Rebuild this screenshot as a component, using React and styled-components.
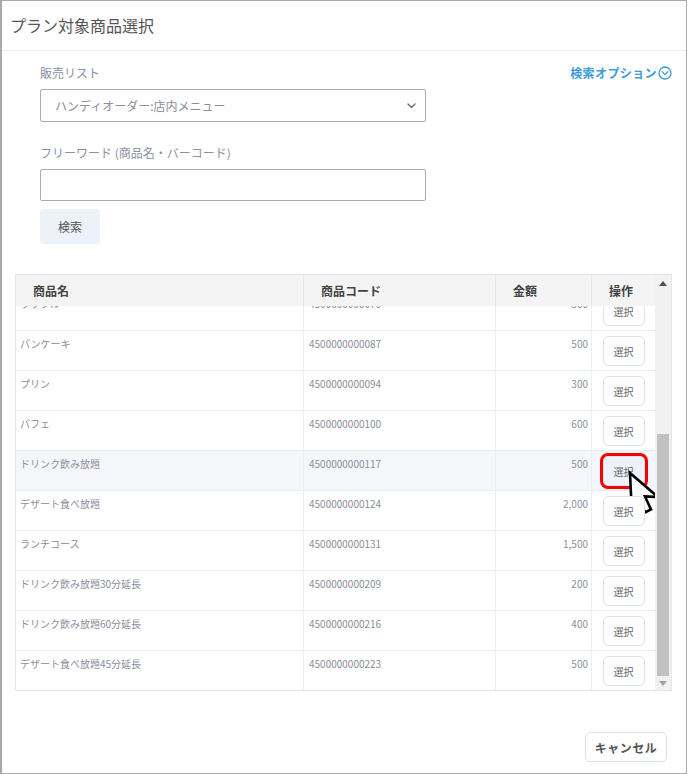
import React from 'react';
import styled, { createGlobalStyle } from 'styled-components';

const Global = createGlobalStyle`
  html, body { margin: 0; padding: 0; background: #fff; }
  body { font-family: "Noto Sans CJK JP", "Noto Sans", sans-serif; }
  * { box-sizing: border-box; }
`;

const Dialog = styled.div`
  width: 687px;
  height: 774px;
  border: 1px solid #a9a9a9;
  border-left-width: 2px;
  display: flex;
  flex-direction: column;
  background: #fff;
`;

const Header = styled.div`
  height: 50px;
  flex: none;
  border-bottom: 1px solid #ededed;
  display: flex;
  align-items: center;
  padding-left: 8px;
  padding-bottom: 2px;
  font-size: 16px;
  color: #555;
`;

const Body = styled.div`
  padding: 0 14px 0 13px;
  display: flex;
  flex-direction: column;
  flex: none;
`;

const Form = styled.div`
  padding-left: 25px;
  display: flex;
  flex-direction: column;
`;

const TopRow = styled.div`
  margin-top: 13px;
  height: 18px;
  display: flex;
  align-items: center;
  justify-content: space-between;
`;

const Label = styled.div`
  font-size: 12px;
  line-height: 18px;
  height: 18px;
  color: #8a8ea6;
  margin-top: ${(p) => p.$mt || 0}px;
`;

const OptionLink = styled.a`
  display: flex;
  align-items: center;
  gap: 1px;
  font-size: 12px;
  letter-spacing: 0.4px;
  font-weight: 700;
  color: #3b9bdb;
  text-decoration: none;
  margin-top: -1px;
`;

const FieldBox = styled.div`
  width: 386px;
  height: ${(p) => p.$h}px;
  margin-top: ${(p) => p.$mt}px;
  border: 1px solid #a8a9c4;
  border-radius: 2px;
  display: flex;
  align-items: center;
  justify-content: space-between;
  padding: 0 9px 0 14px;
  font-size: 12px;
  color: #8a8b9b;
`;

const SearchButton = styled.button`
  margin-top: 8px;
  width: 60px;
  height: 35px;
  border: none;
  border-radius: 4px;
  background: #edf1f8;
  font-family: inherit;
  font-size: 12px;
  color: #555;
  padding: 0;
`;

const Table = styled.div`
  margin-top: 30px;
  height: 417px;
  border: 1px solid #e3e8f0;
  display: flex;
`;

const Main = styled.div`
  flex: 1;
  display: flex;
  flex-direction: column;
  min-width: 0;
`;

const cols = `1fr 192px 96px 64px`;

const HeadRow = styled.div`
  height: 31px;
  flex: none;
  display: grid;
  grid-template-columns: ${cols};
  background: #f4f4f4;
`;

const HeadCell = styled.div`
  display: flex;
  align-items: center;
  padding-left: 17px;
  font-size: 12px;
  font-weight: 700;
  color: #444;
  border-left: ${(p) => (p.$first ? 'none' : '1px solid #e6e6e6')};
`;

const Rows = styled.div`
  height: 384px;
  overflow: hidden;
  display: flex;
  flex-direction: column;
  justify-content: flex-end;
`;

const Row = styled.div`
  height: 40px;
  flex: none;
  display: grid;
  grid-template-columns: ${cols};
  border-top: 1px solid #e9edf5;
  background: ${(p) => (p.$active ? '#f5f6fa' : '#fff')};
`;

const Cell = styled.div`
  padding-top: 6px;
  font-size: 10px;
  line-height: 14px;
  color: #8b8e9c;
  white-space: nowrap;
  text-align: ${(p) => p.$align || 'left'};
  padding-left: ${(p) => p.$pl || 0}px;
  padding-right: ${(p) => p.$pr || 0}px;
  border-left: ${(p) => (p.$first ? 'none' : '1px solid #e9edf5')};
`;

const ActionCell = styled.div`
  border-left: 1px solid #e9edf5;
  display: flex;
  justify-content: center;
  align-items: flex-start;
  padding-top: 5px;
`;

const BtnWrap = styled.div`
  position: relative;
  width: 42px;
  height: 30px;
`;

const SelectBtn = styled.button`
  width: 42px;
  height: 30px;
  border: 1px solid #dce3ef;
  border-radius: 5px;
  background: ${(p) => (p.$active ? '#eef1f8' : '#fff')};
  font-family: inherit;
  font-size: 10px;
  color: #666;
  padding: 0;
  padding-top: 1px;
  outline: ${(p) => (p.$active ? '3px solid #f40000' : 'none')};
  outline-offset: 0;
`;

const Cursor = styled.svg`
  position: absolute;
  left: 25px;
  top: 15px;
  pointer-events: none;
  overflow: visible;
`;

const ScrollBar = styled.div`
  width: 16px;
  flex: none;
  background: #f1f1f1;
  display: flex;
  flex-direction: column;
`;

const Arrow = styled.div`
  height: ${(p) => p.$h}px;
  flex: none;
  display: flex;
  align-items: center;
  justify-content: center;
`;

const Track = styled.div`
  flex: 1;
  display: flex;
  flex-direction: column;
  justify-content: flex-end;
  padding: 0 2px;
`;

const Thumb = styled.div`
  height: 242px;
  background: #c1c1c1;
`;

const Footer = styled.div`
  flex: 1;
  display: flex;
  justify-content: flex-end;
  align-items: flex-start;
  padding-top: 41px;
  padding-right: 19px;
`;

const CancelButton = styled.button`
  width: 82px;
  height: 30px;
  border: 1px solid #d9e1ef;
  border-radius: 5px;
  background: #fff;
  font-family: inherit;
  font-size: 12px;
  font-weight: 700;
  color: #555;
  letter-spacing: 0.5px;
  padding: 0;
`;

const rows = [
  { name: 'ワッフル', code: '4500000000070', price: '300' },
  { name: 'パンケーキ', code: '4500000000087', price: '500' },
  { name: 'プリン', code: '4500000000094', price: '300' },
  { name: 'パフェ', code: '4500000000100', price: '600' },
  { name: 'ドリンク飲み放題', code: '4500000000117', price: '500', active: true },
  { name: 'デザート食べ放題', code: '4500000000124', price: '2,000' },
  { name: 'ランチコース', code: '4500000000131', price: '1,500' },
  { name: 'ドリンク飲み放題30分延長', code: '4500000000209', price: '200' },
  { name: 'ドリンク飲み放題60分延長', code: '4500000000216', price: '400' },
  { name: 'デザート食べ放題45分延長', code: '4500000000223', price: '500' },
];

const CircleChevron = () => (
  <svg width="14" height="14" viewBox="0 0 14 14" fill="none">
    <circle cx="7" cy="7" r="6" stroke="#3b9bdb" strokeWidth="1.3" />
    <path d="M4.2 5.8 L7 8.6 L9.8 5.8" stroke="#3b9bdb" strokeWidth="1.3" strokeLinecap="round" strokeLinejoin="round" />
  </svg>
);

const Chevron = () => (
  <svg width="9" height="6" viewBox="0 0 9 6" fill="none">
    <path d="M1 1 L4.5 4.5 L8 1" stroke="#777" strokeWidth="1.5" strokeLinecap="round" strokeLinejoin="round" />
  </svg>
);

const Triangle = ({ up, color }) => (
  <svg width="8" height="5" viewBox="0 0 8 5">
    <path d={up ? 'M0 5 L4 0 L8 5 Z' : 'M0 0 L8 0 L4 5 Z'} fill={color} />
  </svg>
);

const PointerIcon = () => (
  <Cursor width="34" height="45" viewBox="0 0 34 45">
    <path
      d="M2 2 L3.5 34 L11 27.5 L17 41.5 L23 38.5 L17 25.5 L30 26 Z"
      fill="#fff"
      stroke="#000"
      strokeWidth="2.6"
      strokeLinejoin="miter"
    />
  </Cursor>
);

export default function App() {
  return (
    <>
      <Global />
      <Dialog>
        <Header>プラン対象商品選択</Header>
        <Body>
          <Form>
            <TopRow>
              <Label>販売リスト</Label>
              <OptionLink>
                検索オプション
                <CircleChevron />
              </OptionLink>
            </TopRow>
            <FieldBox $h={33} $mt={7}>
              <span>ハンディオーダー:店内メニュー</span>
              <Chevron />
            </FieldBox>
            <Label $mt={22}>フリーワード (商品名・バーコード)</Label>
            <FieldBox $h={32} $mt={7} />
            <SearchButton>検索</SearchButton>
          </Form>
          <Table>
            <Main>
              <HeadRow>
                <HeadCell $first>商品名</HeadCell>
                <HeadCell>商品コード</HeadCell>
                <HeadCell>金額</HeadCell>
                <HeadCell>操作</HeadCell>
              </HeadRow>
              <Rows>
                {rows.map((r) => (
                  <Row key={r.code} $active={r.active}>
                    <Cell $first $pl={4}>{r.name}</Cell>
                    <Cell $pl={5}>{r.code}</Cell>
                    <Cell $align="right" $pr={3}>{r.price}</Cell>
                    <ActionCell>
                      <BtnWrap>
                        <SelectBtn $active={r.active}>選択</SelectBtn>
                        {r.active && <PointerIcon />}
                      </BtnWrap>
                    </ActionCell>
                  </Row>
                ))}
              </Rows>
            </Main>
            <ScrollBar>
              <Arrow $h={16}>
                <Triangle up color="#505050" />
              </Arrow>
              <Track>
                <Thumb />
              </Track>
              <Arrow $h={14}>
                <Triangle color="#a3a3a3" />
              </Arrow>
            </ScrollBar>
          </Table>
        </Body>
        <Footer>
          <CancelButton>キャンセル</CancelButton>
        </Footer>
      </Dialog>
    </>
  );
}
